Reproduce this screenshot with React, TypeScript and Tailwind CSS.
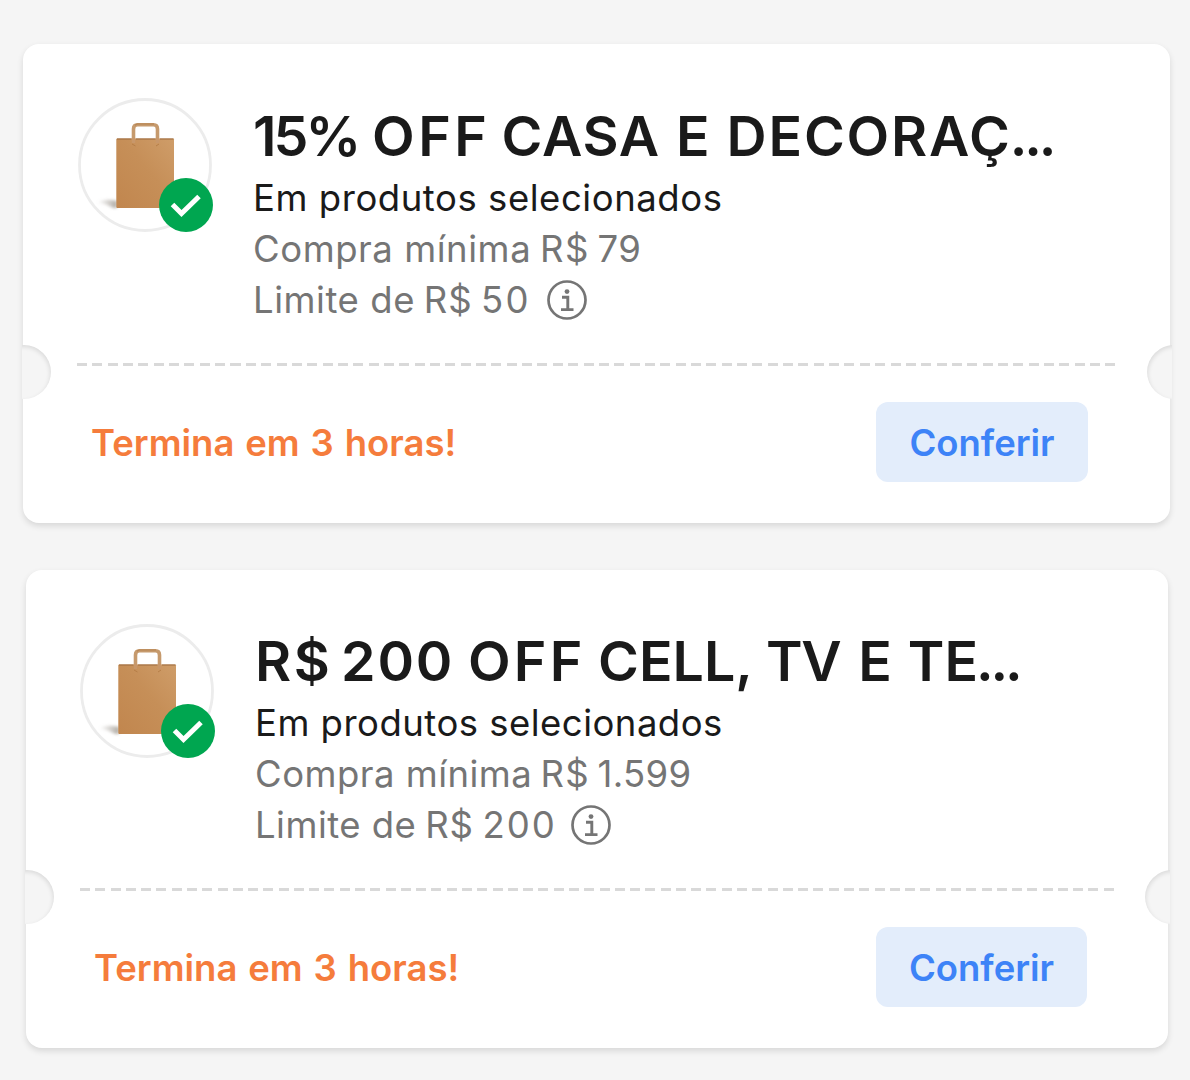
type Word = [text: string, className?: string];

type Coupon = {
  id: number;
  card: string;
  icon: string;
  info: string;
  notch: string;
  divider: string;
  action: string;
  details: string;
  title: Word[];
  minimum: Word[];
  limit: Word[];
};

const coupons: Coupon[] = [
  {
    id: 1,
    card: 'ml-[23px] w-[1147px] h-[479px]',
    icon: 'ml-[54.6px] mr-[42.9px]',
    info: 'ml-[16px]',
    notch: 'top-[301px]',
    divider: 'mt-[37px] ml-[54px] w-[1039px] bg-[repeating-linear-gradient(to_right,#d9d9d9_0_10px,transparent_10px_15.35px)]',
    action: 'w-[212px] mr-[82px]',
    details: 'pt-[5px] tracking-[0.55px]',
    title: [
      ['15%', '-ml-[1.5px] tracking-[-2.9px]'],
      ['OFF', '-ml-[0.5px] tracking-[3.6px]'],
      ['CASA', '-ml-[3px] tracking-[0.8px]'],
      ['E', 'ml-[2px]'],
      ['DECORAÇ', 'ml-[3px] tracking-[1.8px]'],
    ],
    minimum: [
      ['R$', '-ml-[2px] tracking-[1.4px]'],
      ['79', '-ml-[3px] tracking-[0.5px]'],
    ],
    limit: [
      ['R$', '-ml-[2px] tracking-[1px]'],
      ['50', '-ml-[2.5px] tracking-[2.2px]'],
    ],
  },
  {
    id: 2,
    card: 'ml-[26px] w-[1142px] h-[478px]',
    icon: 'ml-[53.5px] mr-[43px]',
    info: 'ml-[14.5px]',
    notch: 'top-[299.5px]',
    divider: 'mt-[36px] ml-[54px] w-[1034px] bg-[repeating-linear-gradient(to_right,#d9d9d9_0_10px,transparent_10px_15.28px)]',
    action: 'w-[211px] mr-[81px]',
    details: 'pt-1 tracking-[0.48px]',
    title: [
      ['R$', '-ml-[1.5px] tracking-[2.6px]'],
      ['200', '-ml-[5.4px] tracking-[1.7px]'],
      ['OFF', 'tracking-[3.2px]'],
      ['CELL,', '-ml-[1.5px]'],
      ['TV', 'ml-[0.3px] tracking-[-1.6px]'],
      ['E', 'ml-[4.3px]'],
      ['TE', 'ml-[2px]'],
    ],
    minimum: [
      ['R$', '-ml-[2.5px] tracking-[1.2px]'],
      ['1.599', '-ml-[3px] tracking-[0.3px]'],
    ],
    limit: [
      ['R$', '-ml-[2px] tracking-[0.8px]'],
      ['200', '-ml-[2px] tracking-[2px]'],
    ],
  },
];

function Words({ words }: { words: Word[] }) {
  return (
    <>
      {words.map(([text, className], i) => (
        <span key={text}>
          {i > 0 && ' '}
          <span className={className}>{text}</span>
        </span>
      ))}
    </>
  );
}

function BagIcon({ id }: { id: number }) {
  return (
    <svg viewBox="0 0 134 134" className="w-[134px] h-[134px]">
      <defs>
        <linearGradient id={`paper-${id}`} x1="0" y1="1" x2="1" y2="0">
          <stop offset="0" stopColor="#c1864e" />
          <stop offset="0.55" stopColor="#c68f58" />
          <stop offset="1" stopColor="#cf9d69" />
        </linearGradient>
        <linearGradient id={`shade-${id}`} x1="0" y1="0" x2="1" y2="0">
          <stop offset="0" stopColor="#a39e98" stopOpacity="0" />
          <stop offset="1" stopColor="#8a8378" stopOpacity="0.7" />
        </linearGradient>
        <filter id={`soft-${id}`} x="-30%" y="-60%" width="160%" height="220%">
          <feGaussianBlur stdDeviation="1.6" />
        </filter>
      </defs>
      <circle cx="67" cy="67" r="65.5" fill="#fff" stroke="#ececec" strokeWidth="2.8" />
      <path d="M19 104Q27 100 39 103V110H35Q27 106 19 104Z" fill={`url(#shade-${id})`} filter={`url(#soft-${id})`} />
      <path d="M55.5 44V31Q55.5 26.8 59.5 26.8H75.5Q79.5 26.8 79.5 31V44" fill="none" stroke="#c69a6d" strokeWidth="3.6" />
      <path d="M57 27.200L59 26H76" fill="none" stroke="#b58453" strokeWidth="1.2" />
      <rect x="38.3" y="40.5" width="57.7" height="69.5" rx="1" fill={`url(#paper-${id})`} />
      <path d="M39 41H53.5M58 41H77.5M82 41H95.5" stroke="#9c6b3f" strokeWidth="1.2" />
      <path d="M55.5 40V45M79.5 40V45" stroke="#c8976a" strokeWidth="3.4" />
      <path d="M54 46L57.5 48M81 46L78 48" stroke="#b67e47" strokeWidth="1" />
    </svg>
  );
}

function CheckBadge() {
  return (
    <svg viewBox="0 0 54 54" className="absolute -right-px bottom-0 w-[54px] h-[54px]">
      <circle cx="27" cy="27" r="27" fill="#00a650" />
      <path d="M13.5 26.5L22.5 35.5L40 18.5" fill="none" stroke="#fff" strokeWidth="5" />
    </svg>
  );
}

function InfoIcon({ className }: { className: string }) {
  return (
    <svg viewBox="0 0 40 40" className={`w-10 h-10 -mt-[2px] ${className}`} fill="none" stroke="#757575">
      <circle cx="20" cy="20" r="18.5" strokeWidth="2.7" />
      <circle cx="20" cy="11.6" r="2.4" fill="#757575" stroke="none" />
      <path d="M15 17.3H20.8V29.5M14 29.6H26.5" strokeWidth="2.9" />
    </svg>
  );
}

function CouponCard({ coupon }: { coupon: Coupon }) {
  return (
    <article className={`relative rounded-[16px] bg-white shadow-[0_3px_6px_rgba(0,0,0,0.12)] ${coupon.card}`}>
      <div className="flex h-[282px] pt-[54px]">
        <div className={`relative w-[134px] h-[134px] shrink-0 ${coupon.icon}`}>
          <BagIcon id={coupon.id} />
          <CheckBadge />
        </div>
        <div className={`whitespace-nowrap text-[36.5px] leading-[51px] text-[#757575] ${coupon.details}`}>
          <h2 className="mb-1 text-[55.5px] leading-[66px] font-semibold tracking-normal text-[#1a1a1a]">
            <Words words={coupon.title} />
            <span className="-ml-[2px] tracking-[-3.2px]">...</span>
          </h2>
          <p className="-ml-[1.5px] text-[#1a1a1a]">Em produtos selecionados</p>
          <p className="-ml-[1.5px]">
            Compra mínima <Words words={coupon.minimum} />
          </p>
          <div className="-ml-[1.5px] flex items-center">
            <p>
              Limite de <Words words={coupon.limit} />
            </p>
            <InfoIcon className={coupon.info} />
          </div>
        </div>
      </div>

      <div className={`h-[3px] ${coupon.divider}`} />

      <div className={`absolute -left-px w-[29px] h-[54px] overflow-hidden ${coupon.notch}`}>
        <div className="absolute right-0 w-[54px] h-[54px] rounded-full bg-[#f5f5f5] shadow-[inset_-1px_2px_4px_rgba(0,0,0,0.1)]" />
      </div>
      <div className={`absolute -right-[2px] w-[25px] h-[54px] overflow-hidden ${coupon.notch}`}>
        <div className="absolute left-0 w-[54px] h-[54px] rounded-full bg-[#f5f5f5] shadow-[inset_1px_2px_4px_rgba(0,0,0,0.1)]" />
      </div>

      <footer className="flex items-center justify-between pt-[36px] pl-[68px] text-[36.5px] font-semibold">
        <span className="pt-[2px] text-[#f57c3c] [word-spacing:1.7px]">Termina em 3 horas!</span>
        <button className={`h-20 pt-[2px] rounded-[12px] bg-[#e3edfb] text-[#3d83f7] ${coupon.action}`}>Conferir</button>
      </footer>
    </article>
  );
}

export default function App() {
  return (
    <main className="flex flex-col gap-[47px] h-[1080px] pt-[44px] overflow-hidden bg-[#f5f5f5] font-['Inter','Liberation_Sans',sans-serif]">
      {coupons.map(coupon => (
        <CouponCard key={coupon.id} coupon={coupon} />
      ))}
    </main>
  );
}
